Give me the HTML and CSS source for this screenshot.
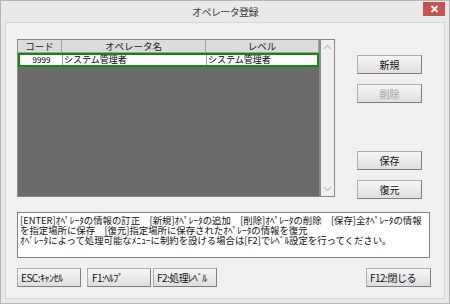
FILE: index.html
```html
<!DOCTYPE html>
<html lang="ja">
<head>
    <meta charset="UTF-8">
    <title>オペレータ登録</title>
    <link rel="stylesheet" href="styles.css">
</head>
<body>
    <div class="window">
        <div class="titlebar">
            <span class="title">オペレータ登録</span>
            <div class="close">
                <svg width="9" height="8" viewBox="0 0 9 8"><path d="M1.5 1 L7.5 7 M7.5 1 L1.5 7" stroke="#fff" stroke-width="1.8"/></svg>
            </div>
        </div>
        <div class="client">
            <div class="top">
                <div class="grid">
                    <div class="grid-body">
                        <div class="row head">
                            <div class="cell c-code">コード</div>
                            <div class="cell c-name">オペレータ名</div>
                            <div class="cell c-level">レベル</div>
                        </div>
                        <div class="row data">
                            <div class="cell c-code">9999</div>
                            <div class="cell c-name">システム管理者</div>
                            <div class="cell c-level">システム管理者</div>
                        </div>
                    </div>
                    <div class="scrollbar">
                        <svg width="9" height="6" viewBox="0 0 9 6"><path d="M1 5 L4.5 1.5 L8 5" fill="none" stroke="#c2c2c2" stroke-width="1.5"/></svg>
                        <svg width="9" height="6" viewBox="0 0 9 6"><path d="M1 1 L4.5 4.5 L8 1" fill="none" stroke="#c2c2c2" stroke-width="1.5"/></svg>
                    </div>
                </div>
                <div class="side">
                    <button class="btn side-btn">新規</button>
                    <button class="btn side-btn disabled">削除</button>
                    <button class="btn side-btn save">保存</button>
                    <button class="btn side-btn">復元</button>
                </div>
            </div>
            <div class="message">
                <div class="line">[ENTER]ｵﾍﾟﾚｰﾀの情報の訂正　[新規]ｵﾍﾟﾚｰﾀの追加　[削除]ｵﾍﾟﾚｰﾀの削除　[保存]全ｵﾍﾟﾚｰﾀの情報</div>
                <div class="line">を指定場所に保存　[復元]指定場所に保存されたｵﾍﾟﾚｰﾀの情報を復元</div>
                <div class="line">ｵﾍﾟﾚｰﾀによって処理可能なﾒﾆｭｰに制約を設ける場合は[F2]でﾚﾍﾞﾙ設定を行ってください。</div>
            </div>
            <div class="bottom">
                <button class="btn key esc">ESC:ｷｬﾝｾﾙ</button>
                <button class="btn key f1">F1:ﾍﾙﾌﾟ</button>
                <button class="btn key">F2:処理ﾚﾍﾞﾙ</button>
                <button class="btn key f12">F12:閉じる</button>
            </div>
        </div>
    </div>
</body>
</html>
```

FILE: styles.css
```css
body {
    margin: 0;
    font-family: "Noto Sans CJK JP", "Noto Sans", sans-serif;
    background: #ffffff;
}

.window {
    width: 450px;
    height: 304px;
    box-sizing: border-box;
    border: 1px solid #b4b4b4;
    background-color: #e9e9e9;
    display: flex;
    flex-direction: column;
}

.titlebar {
    height: 21px;
    position: relative;
    display: flex;
    justify-content: center;
    align-items: center;
}

.title {
    font-size: 10px;
    color: #3c3c3c;
    letter-spacing: -0.6px;
}

.close {
    position: absolute;
    right: 4px;
    top: 1px;
    width: 22px;
    height: 14px;
    background-color: #c75050;
    display: flex;
    justify-content: center;
    align-items: center;
}

.client {
    margin: 0 4px 4px 4px;
    border: 1px solid #d6d6d6;
    background-color: #f0f0f0;
    flex: 1;
    padding: 16px 0 0 11px;
}

.top {
    display: flex;
    align-items: flex-start;
    height: 158px;
}

.grid {
    width: 318px;
    height: 158px;
    box-sizing: border-box;
    border: 1px solid #8a8a8a;
    display: flex;
}

.grid-body {
    flex: 1;
    background-color: #6b6b6b;
}

.row {
    display: flex;
    font-size: 9.5px;
    line-height: 12px;
}

.head {
    background-color: #dcdcdc;
    border-bottom: 1px solid #a0a0a0;
    color: #222;
}

.head .cell {
    text-align: center;
    border-right: 1px solid #a0a0a0;
}

.data {
    background-color: #ffffff;
    border: 2px solid #0f8a0f;
    height: 14px;
    box-sizing: border-box;
    line-height: 10px;
    font-size: 9px;
}

.data .cell {
    border-right: 1px solid #a0a0a0;
    padding-left: 1px;
}

.data .c-level {
    border-right: none;
}

.cell {
    box-sizing: border-box;
    white-space: nowrap;
}

.c-code {
    width: 44px;
}

.data .c-code {
    width: 43px;
    text-align: center;
    font-size: 8px;
}

.c-name {
    width: 144px;
}

.c-level {
    flex: 1;
}

.scrollbar {
    width: 13px;
    border-left: 2px solid #8a8a8a;
    background-color: #f0f0f0;
    display: flex;
    flex-direction: column;
    justify-content: space-between;
    align-items: center;
    padding: 4px 0;
}

.side {
    display: flex;
    flex-direction: column;
    margin-left: 22px;
    padding-top: 16px;
}

.btn {
    font-family: "Noto Sans CJK JP", "Noto Sans", sans-serif;
    font-size: 10px;
    color: #111;
    height: 19px;
    padding: 0;
    box-sizing: border-box;
    border: 1px solid #adadad;
    border-right-color: #7f7f7f;
    border-bottom-color: #7f7f7f;
    background: linear-gradient(#f6f6f6, #dedede);
    line-height: 16px;
}

.side-btn {
    width: 65px;
    margin-bottom: 10px;
    text-align: center;
}

.side-btn.save {
    margin-top: 38px;
}

.disabled {
    color: #a3a3a3;
}

.message {
    margin-top: 15px;
    width: 413px;
    height: 46px;
    box-sizing: border-box;
    background-color: #ffffff;
    border: 1px solid #828282;
    padding: 2px 0 0 2px;
    font-size: 9.4px;
    line-height: 10px;
    color: #111;
}

.line {
    white-space: nowrap;
    letter-spacing: 0;
}

.bottom {
    display: flex;
    margin-top: 10px;
}

.key {
    width: 64px;
    text-align: left;
    padding-left: 3px;
    letter-spacing: -0.5px;
}

.f1 {
    margin-left: 6px;
    padding-left: 4px;
}

.esc + .f1 + .key {
    margin-left: 2px;
}

.f12 {
    margin-left: auto;
    margin-right: 13px;
    width: 65px;
}
```
